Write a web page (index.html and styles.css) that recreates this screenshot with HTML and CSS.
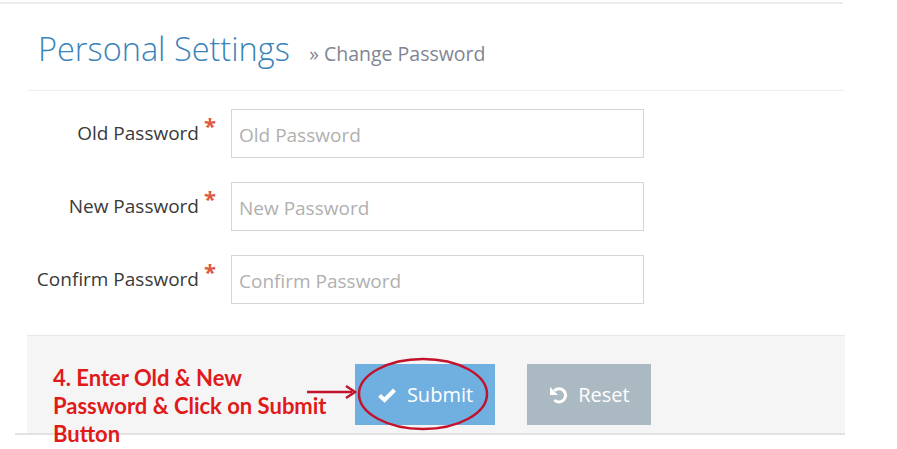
FILE: index.html
```html
<!DOCTYPE html>
<html lang="en">
<head>
<meta charset="utf-8">
<title>Personal Settings - Change Password</title>
<link rel="stylesheet" href="styles.css">
</head>
<body>
<div class="page">
  <div class="topline"></div>
  <div class="page-header">
    <h1>Personal Settings <small>&raquo; Change Password</small></h1>
  </div>

  <form class="form">
    <div class="row">
      <label class="label">Old Password<span class="req">*</span></label>
      <input class="input" type="password" placeholder="Old Password">
    </div>
    <div class="row">
      <label class="label">New Password<span class="req">*</span></label>
      <input class="input" type="password" placeholder="New Password">
    </div>
    <div class="row">
      <label class="label">Confirm Password<span class="req">*</span></label>
      <input class="input" type="password" placeholder="Confirm Password">
    </div>

    <div class="actions-wrap">
      <div class="actions">
        <button type="button" class="btn btn-info">
          <svg class="ico" width="20" height="16" viewBox="0 0 20 16"><path d="M2.5 8.5 L7.5 13 L17.5 3" fill="none" stroke="#fff" stroke-width="4" stroke-linejoin="miter"/></svg>
          Submit
        </button>
        <button type="button" class="btn btn-grey">
          <svg class="ico" width="20" height="20" viewBox="0 0 20 20"><path d="M6.3 5.7 A6.6 6.6 0 1 1 6.3 15" fill="none" stroke="#fff" stroke-width="3"/><polygon points="2,2 2,10 10,10" fill="#fff"/></svg>
          Reset
        </button>
      </div>
    </div>
  </form>

  <div class="note">4. Enter Old &amp; New<br>Password &amp; Click on Submit<br>Button</div>
  <svg class="markup" width="220" height="100" viewBox="0 0 220 100">
    <ellipse cx="123" cy="44" rx="64" ry="35" fill="none" stroke="#c3132c" stroke-width="2.5"/>
    <line x1="7" y1="42" x2="52" y2="42" stroke="#c3132c" stroke-width="2.5"/>
    <polyline points="46,36 55,42 46,48" fill="none" stroke="#c3132c" stroke-width="2.5"/>
  </svg>
</div>
</body>
</html>
```

FILE: styles.css
```css
html, body {
  margin: 0;
  padding: 0;
  background: #fff;
}

.page {
  position: relative;
  width: 897px;
  height: 449px;
  overflow: hidden;
  font-family: "Open Sans", "Noto Sans", sans-serif;
}

.topline {
  margin-top: 2px;
  width: 843px;
  height: 2px;
  background: #ececec;
}

.page-header {
  margin-left: 27px;
  width: 818px;
  padding: 25px 0 16px 11px;
  box-sizing: border-box;
  border-bottom: 1px solid #eeeeee;
}

.page-header h1 {
  margin: 0;
  font-size: 32.5px;
  line-height: 40px;
  font-weight: 300;
  color: #3a83b8;
}

.page-header small {
  margin-left: 11px;
  font-size: 19.5px;
  font-weight: 400;
  color: #7f8692;
}

.form {
  margin: 18px 0 0 0;
}

.row {
  display: flex;
  align-items: center;
  margin-bottom: 24px;
}

.label {
  width: 215px;
  text-align: right;
  font-size: 19px;
  color: #393939;
  padding-bottom: 2px;
}

.req {
  display: inline-block;
  width: 11px;
  margin-left: 5px;
  text-align: left;
  color: #dd5a43;
  font-weight: 700;
  font-size: 22px;
  vertical-align: top;
  line-height: 18px;
  position: relative;
  top: -4px;
}

.input {
  margin: 0 0 0 16px;
  width: 413px;
  height: 49px;
  box-sizing: border-box;
  border: 1px solid #d5d5d5;
  padding: 2px 7px 0;
  font-family: "Open Sans", "Noto Sans", sans-serif;
  font-size: 19px;
  color: #333;
  background: #fff;
  outline: none;
}

.input::placeholder {
  color: #b0b0b0;
}

.actions-wrap {
  margin: 31px 0 0 15px;
  width: 830px;
  padding-left: 12px;
  box-sizing: border-box;
  border-bottom: 2px solid #e2e2e2;
}

.actions {
  display: flex;
  gap: 32px;
  background: #f5f5f5;
  border-top: 1px solid #e8e8e8;
  padding: 28px 0 8px 328px;
}

.btn {
  display: flex;
  align-items: center;
  justify-content: center;
  gap: 10px;
  height: 61px;
  border: 0;
  padding: 0;
  font-family: "Open Sans", "Noto Sans", sans-serif;
  font-size: 20px;
  color: #fff;
}

.btn-info {
  width: 140px;
  background: #6fb0e0;
}

.btn-grey {
  width: 124px;
  background: #abb9c2;
}

.ico {
  display: block;
}

.note {
  position: absolute;
  left: 53px;
  top: 364px;
  font-family: Lato, "Liberation Sans", sans-serif;
  font-weight: 700;
  font-size: 22px;
  line-height: 28px;
  color: #e01a1a;
}

.markup {
  position: absolute;
  left: 300px;
  top: 350px;
}
```
